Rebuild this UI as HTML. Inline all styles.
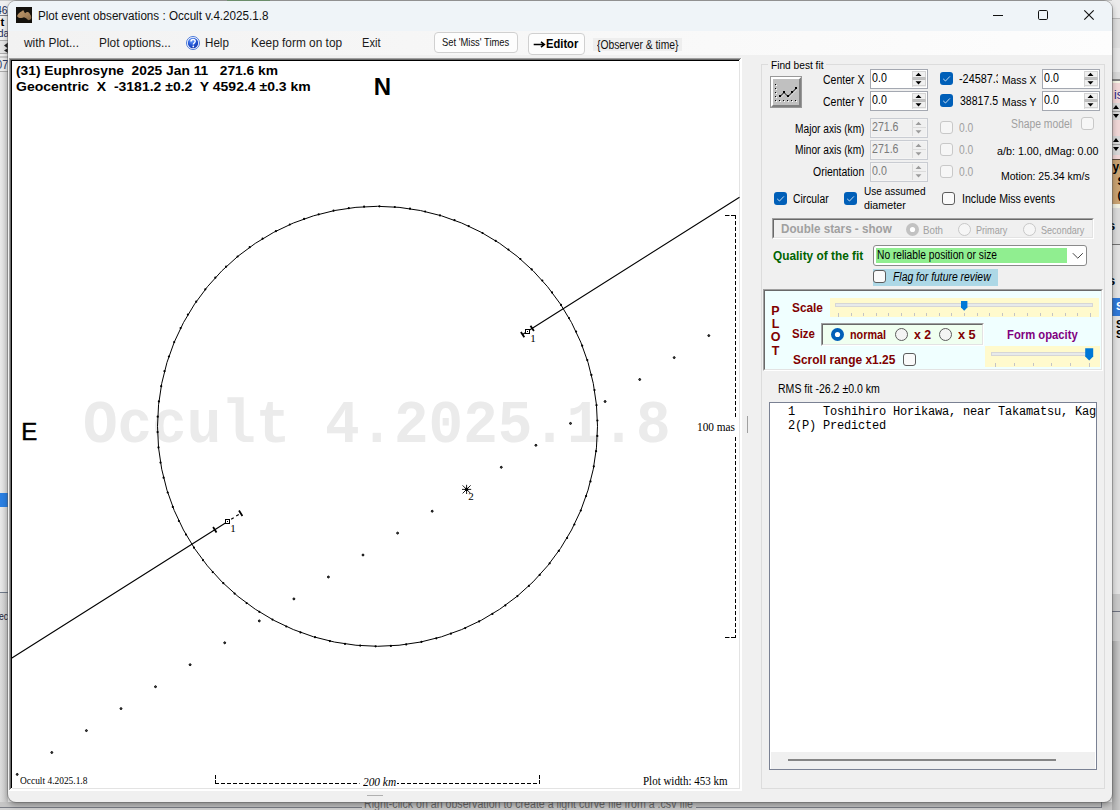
<!DOCTYPE html>
<html><head><meta charset="utf-8"><title>Plot event observations</title>
<style>
html,body{margin:0;padding:0;}
body{width:1120px;height:810px;overflow:hidden;position:relative;background:#cdcdcd;font-family:"Liberation Sans",sans-serif;}
.t{position:absolute;white-space:pre;display:block;}
.r{position:absolute;box-sizing:border-box;}
svg{position:absolute;overflow:visible;}
#root{position:absolute;left:0;top:0;width:1120px;height:810px;overflow:hidden;}
</style></head><body><div id="root">
<div class="r" style="left:0px;top:0px;width:1120px;height:810px;background:#f0f0f0;"></div>
<div class="r" style="left:0px;top:0px;width:1120px;height:1px;background:#c8c8c8;"></div>
<div class="r" style="left:227px;top:0px;width:43px;height:1px;background:#7fbf7f;"></div>
<div class="r" style="left:0px;top:1px;width:8px;height:56px;background:#f0f0f0;"></div>
<span class="t" style="left:-4.00px;top:4.00px;font-size:10.5px;line-height:12px;font-family:'Liberation Sans',sans-serif;color:#1a2a55;transform:scale(0.9935,1);transform-origin:0 10px;">46</span>
<div class="r" style="left:0px;top:15px;width:8px;height:1px;background:#7d808a;"></div>
<span class="t" style="left:0.50px;top:16.00px;font-size:11.5px;line-height:12px;font-family:'Liberation Sans',sans-serif;color:#000;font-weight:bold;">t</span>
<span class="t" style="left:-2.50px;top:27.00px;font-size:10.5px;line-height:12px;font-family:'Liberation Sans',sans-serif;color:#1a2a55;transform:scale(0.9413,1);transform-origin:0 10px;">da</span>
<div class="r" style="left:0px;top:40px;width:8px;height:14px;background:#e4e4e4;border-top:1px solid #adadad;border-bottom:1px solid #adadad;"></div>
<svg style="left:0;top:0" width="8" height="60"><path d="M4 45.500l4-3v6zM4 50.500l4-2.500v5z" fill="#222"/></svg>
<div class="r" style="left:0px;top:56px;width:8px;height:2px;background:#c9c9c9;"></div>
<div class="r" style="left:0px;top:58px;width:8px;height:14px;background:#ececec;"></div>
<span class="t" style="left:-4.50px;top:58.00px;font-size:12px;line-height:14px;font-family:'Liberation Sans',sans-serif;color:#2c3a66;transform:scale(0.9218,1);transform-origin:0 11px;">07</span>
<div class="r" style="left:0px;top:71px;width:8px;height:1px;background:#a8a8a8;"></div>
<div class="r" style="left:0;top:72px;width:8px;height:730px;background:linear-gradient(90deg,#e9e9e9,#d6d6d6)"></div>
<div class="r" style="left:0px;top:493px;width:8px;height:14px;background:#2a7fe2;"></div>
<div class="r" style="left:0px;top:592px;width:8px;height:1px;background:#6e7887;"></div>
<div class="r" style="left:0;top:593px;width:8px;height:209px;background:linear-gradient(90deg,#dcdcdc,#c8c8c8)"></div>
<span class="t" style="left:-1.50px;top:610.00px;font-size:10.5px;line-height:12px;font-family:'Liberation Sans',sans-serif;color:#223;transform:scale(0.8207,1);transform-origin:0 10px;">ec</span>
<div class="r" style="left:1112px;top:0px;width:8px;height:18px;background:#ebebeb;"></div>
<div class="r" style="left:1112px;top:18px;width:8px;height:1px;background:#b8b8b8;"></div>
<div class="r" style="left:1112px;top:19px;width:8px;height:29px;background:#dedede;"></div>
<div class="r" style="left:1112px;top:48px;width:8px;height:24px;background:#e6e6e6;"></div>
<div class="r" style="left:1112px;top:72px;width:8px;height:7px;background:#d8d8d8;"></div>
<div class="r" style="left:1112px;top:79px;width:8px;height:2px;background:#808080;"></div>
<div class="r" style="left:1112px;top:81px;width:8px;height:2px;background:#f6f6e6;"></div>
<div class="r" style="left:1112px;top:83px;width:8px;height:77px;background:#f0d6d6;"></div>
<div class="r" style="left:1112px;top:103px;width:8px;height:17px;background:#d8d8d8;"></div>
<div class="r" style="left:1112px;top:111px;width:8px;height:1px;background:#a0a0a0;"></div>
<div class="r" style="left:1112px;top:136px;width:8px;height:17px;background:#d8d8d8;"></div>
<div class="r" style="left:1112px;top:144px;width:8px;height:1px;background:#a0a0a0;"></div>
<div class="r" style="left:1112px;top:153px;width:8px;height:2px;background:#d7d7d7;"></div>
<svg style="left:0;top:0" width="1120" height="810"><path d="M1113 109l3-4 3 4zM1113 114l3 4 3-4zM1113 142l3-4 3 4zM1113 147l3 4 3-4z" fill="#000"/></svg>
<span class="t" style="left:1114.00px;top:88.00px;font-size:12px;line-height:14px;font-family:'Liberation Sans',sans-serif;color:#228;">is</span>
<div class="r" style="left:1112px;top:159px;width:8px;height:1px;background:#5a4a3a;"></div>
<div class="r" style="left:1112px;top:160px;width:8px;height:44px;background:#c9a373;"></div>
<span class="t" style="left:1112.50px;top:160.00px;font-size:12px;line-height:14px;font-family:'Liberation Sans',sans-serif;color:#000;font-weight:bold;">ye</span>
<span class="t" style="left:1117.50px;top:175.00px;font-size:11px;line-height:12px;font-family:'Liberation Sans',sans-serif;color:#000;font-weight:bold;">S</span>
<span class="t" style="left:1117.50px;top:189.00px;font-size:11px;line-height:12px;font-family:'Liberation Sans',sans-serif;color:#000;font-weight:bold;">(</span>
<div class="r" style="left:1112px;top:204px;width:8px;height:4px;background:#f0f0e2;"></div>
<div class="r" style="left:1112px;top:208px;width:8px;height:36px;background:#dadada;"></div>
<span class="t" style="left:1108.00px;top:218.00px;font-size:13px;line-height:15px;font-family:'Liberation Sans',sans-serif;color:#000;font-weight:bold;">s</span>
<div class="r" style="left:1112px;top:244px;width:8px;height:1px;background:#707070;"></div>
<div class="r" style="left:1112px;top:245px;width:8px;height:349px;background:#e2e2e2;"></div>
<span class="t" style="left:1108.00px;top:273.00px;font-size:13px;line-height:15px;font-family:'Liberation Sans',sans-serif;color:#000;font-weight:bold;">s</span>
<div class="r" style="left:1112px;top:298px;width:8px;height:18px;background:#2f78d7;"></div>
<span class="t" style="left:1116.00px;top:300.00px;font-size:11px;line-height:12px;font-family:'Liberation Sans',sans-serif;color:#fff;font-weight:bold;">S</span>
<span class="t" style="left:1116.00px;top:318.00px;font-size:11px;line-height:12px;font-family:'Liberation Sans',sans-serif;color:#000;font-weight:bold;">S</span>
<span class="t" style="left:1116.00px;top:328.00px;font-size:11px;line-height:12px;font-family:'Liberation Sans',sans-serif;color:#000;font-weight:bold;">S</span>
<div class="r" style="left:1112px;top:594px;width:8px;height:17px;background:#c8c8c8;"></div>
<div class="r" style="left:1112px;top:611px;width:8px;height:1px;background:#6e7280;"></div>
<div class="r" style="left:1112px;top:612px;width:8px;height:29px;background:#cdcdcd;"></div>
<div class="r" style="left:1112px;top:641px;width:8px;height:169px;background:linear-gradient(90deg,#a8a8a8,#c8c8c8)"></div>
<div class="r" style="left:0px;top:802px;width:1112px;height:8px;background:#c6c6c6;"></div>
<div class="r" style="left:0px;top:807px;width:1102px;height:1px;background:#7a7d86;"></div>
<div class="r" style="left:1101px;top:802px;width:1px;height:6px;background:#7a7d86;"></div>
<div class="r" style="left:0px;top:808px;width:1102px;height:2px;background:#d2d2d2;"></div>
<div class="r" style="left:362px;top:802px;width:334px;height:8px;background:#c9c9c9;"></div>
<span class="t" style="left:364.00px;top:796.00px;font-size:13px;line-height:15px;font-family:'Liberation Sans',sans-serif;color:#6a6a6a;transform:scale(0.8175,1);transform-origin:0 12px;">Right-click on an observation to create a light curve file from a .csv file</span>
<div class="r" style="left:8px;top:1px;width:1104px;height:801px;background:#f0f0f0;border-radius:8px;box-shadow:0 0 0 1px rgba(90,90,90,.45),0 3px 6px rgba(0,0,0,.35)"></div>
<div class="r" style="left:8px;top:1px;width:1104px;height:30px;background:#eff4f8;border-radius:8px 8px 0 0"></div>
<div class="r" style="left:8px;top:31px;width:1104px;height:24px;background:linear-gradient(90deg,#f2f2f2,#fdfdfd)"></div>
<svg style="left:16px;top:7px" width="16" height="16"><defs><linearGradient id="ag" x1="0" y1="0" x2="1" y2="1"><stop offset="0" stop-color="#bb9669"/><stop offset=".6" stop-color="#a8845b"/><stop offset="1" stop-color="#7d6244"/></linearGradient></defs><rect width="16" height="16" fill="#14110d"/><path d="M1.100 9.100C1.500 7.500 2.200 6.800 2.700 6.400C3.500 5.500 4.500 5 5.400 4.600C6 4 6.600 3.300 7.200 3.200C7.700 3.400 7.800 4.200 8 4.600C8.400 5.300 8.700 5.900 9.100 6.200C10 5.600 11 5 11.800 5.100C12.800 5.400 13.500 6.200 13.900 7C14.700 8 15.200 9 15.300 10.200C15.300 11.300 14.900 12.200 14.200 12.600C13.600 13 12.900 13.200 12.300 13.100C11.500 12.600 10.800 11.900 10.200 11.300C9.500 10.800 8.700 10.300 8 10.200C7.100 10.400 6.200 10.800 5.400 11C4.500 11.100 3.500 11 2.700 10.700C2 10.400 1.300 9.800 1.100 9.100Z" fill="url(#ag)"/><path d="M8.600 6.600C9.200 8 9.600 9.400 10.600 10.600" fill="none" stroke="#9a7a55" stroke-width=".8" stroke-opacity=".7"/></svg>
<span class="t" style="left:37.50px;top:9.00px;font-size:12px;line-height:14px;font-family:'Liberation Sans',sans-serif;color:#111;transform:scale(0.9715,1);transform-origin:0 11px;">Plot event observations : Occult v.4.2025.1.8</span>
<svg style="left:0;top:0" width="1120" height="40"><g stroke="#111" stroke-width="1" fill="none"><path d="M993 15.500h10"/><rect x="1038.500" y="10.500" width="9" height="9" rx="1.200"/><path d="M1084.300 10.300l9.400 9.400M1093.700 10.300l-9.400 9.400" stroke-width="1.150"/></g></svg>
<span class="t" style="left:23.52px;top:36.00px;font-size:12px;line-height:14px;font-family:'Liberation Sans',sans-serif;color:#1a1a1a;transform:scale(0.9931,1);transform-origin:0 11px;">with Plot...</span>
<span class="t" style="left:98.60px;top:36.00px;font-size:12px;line-height:14px;font-family:'Liberation Sans',sans-serif;color:#1a1a1a;transform:scale(0.9875,1);transform-origin:0 11px;">Plot options...</span>
<svg style="left:186px;top:36px" width="14" height="14"><defs><radialGradient id="hg" cx="38%" cy="28%" r="80%"><stop offset="0" stop-color="#6fa2ff"/><stop offset=".5" stop-color="#2358d8"/><stop offset="1" stop-color="#1736a8"/></radialGradient></defs><circle cx="7" cy="7" r="6.500" fill="#fff" stroke="#4a78d8" stroke-width="1"/><circle cx="7" cy="7" r="5.200" fill="url(#hg)"/><path d="M5 5.600c0-1.300 .9-2.100 2.100-2.100 1.200 0 2.100 .7 2.100 1.800 0 1.600-1.900 1.700-1.900 3.200" fill="none" stroke="#fff" stroke-width="1.400"/><circle cx="7.300" cy="10.400" r=".85" fill="#fff"/></svg>
<span class="t" style="left:204.80px;top:36.00px;font-size:12px;line-height:14px;font-family:'Liberation Sans',sans-serif;color:#1a1a1a;transform:scale(0.9682,1);transform-origin:0 11px;">Help</span>
<span class="t" style="left:250.60px;top:36.00px;font-size:12px;line-height:14px;font-family:'Liberation Sans',sans-serif;color:#1a1a1a;transform:scale(0.9897,1);transform-origin:0 11px;">Keep form on top</span>
<span class="t" style="left:361.50px;top:36.00px;font-size:12px;line-height:14px;font-family:'Liberation Sans',sans-serif;color:#1a1a1a;transform:scale(0.9248,1);transform-origin:0 11px;">Exit</span>
<div class="r" style="left:434px;top:32px;width:84px;height:21px;background:#fdfdfd;border:1px solid #d0d0d0;border-radius:4px;"></div>
<span class="t" style="left:441.50px;top:36.00px;font-size:11px;line-height:12px;font-family:'Liberation Sans',sans-serif;color:#111;transform:scale(0.8531,1);transform-origin:0 10px;">Set 'Miss' Times</span>
<div class="r" style="left:527.5px;top:32.5px;width:57.5px;height:22px;background:#fdfdfd;border:1px solid #d0d0d0;border-radius:4px;"></div>
<span class="t" style="left:545.60px;top:37.00px;font-size:12.5px;line-height:14px;font-family:'Liberation Sans',sans-serif;color:#000;font-weight:bold;transform:scale(0.8944,1);transform-origin:0 11px;">Editor</span>
<svg style="left:0;top:0" width="1120" height="60"><path d="M533.700 44.500H544.200M541 41.800l3.400 2.700-3.400 2.700" fill="none" stroke="#000" stroke-width="1.500"/></svg>
<div class="r" style="left:593px;top:38px;width:89px;height:13px;background:#eeeeee;"></div>
<span class="t" style="left:596.80px;top:38.00px;font-size:12px;line-height:14px;font-family:'Liberation Sans',sans-serif;color:#111;transform:scale(0.8595,1);transform-origin:0 11px;">{Observer &amp; time}</span>
<div class="r" style="left:9px;top:58px;width:733px;height:733px;background:#fff;"></div>
<div class="r" style="left:9px;top:58px;width:732px;height:1px;background:#a0a0a0;"></div>
<div class="r" style="left:9px;top:58px;width:1px;height:732px;background:#a0a0a0;"></div>
<div class="r" style="left:10px;top:59px;width:730px;height:1px;background:#696969;"></div>
<div class="r" style="left:10px;top:59px;width:1px;height:730px;background:#696969;"></div>
<div class="r" style="left:11px;top:60px;width:728px;height:1px;background:#000;"></div>
<div class="r" style="left:11px;top:60px;width:1px;height:728px;background:#000;"></div>
<div class="r" style="left:739px;top:61px;width:1px;height:728px;background:#e3e3e3;"></div>
<div class="r" style="left:12px;top:788px;width:728px;height:1px;background:#e3e3e3;"></div>
<span class="t" style="left:82.50px;top:390.00px;font-size:62px;line-height:71px;font-family:'Liberation Mono',monospace;color:#ebebeb;font-weight:bold;transform:scale(0.9288,1);transform-origin:0 52px;">Occult 4.2025.1.8</span>
<span class="t" style="left:15.60px;top:63.00px;font-size:13.33px;line-height:15px;font-family:'Liberation Sans',sans-serif;color:#000;font-weight:bold;transform:scale(1.0339,1);transform-origin:0 12px;">(31) Euphrosyne  2025 Jan 11   271.6 km</span>
<span class="t" style="left:15.80px;top:79.00px;font-size:13.33px;line-height:15px;font-family:'Liberation Sans',sans-serif;color:#000;font-weight:bold;transform:scale(1.0491,1);transform-origin:0 12px;">Geocentric  X  -3181.2 ±0.2  Y 4592.4 ±0.3 km</span>
<span class="t" style="left:373.80px;top:73.00px;font-size:24px;line-height:27px;font-family:'Liberation Sans',sans-serif;color:#000;font-weight:bold;">N</span>
<span class="t" style="left:21.20px;top:418.00px;font-size:24px;line-height:27px;font-family:'Liberation Sans',sans-serif;color:#000;-webkit-text-stroke:0.500px #000;">E</span>
<svg style="left:0;top:0" width="1120" height="810"><circle cx="377.5" cy="426.3" r="220" fill="none" stroke="#000" stroke-width="1"/><path d="M597.3 435.9h0M596.1 451.2h0M593.8 466.4h0M590.5 481.4h0M586.1 496.1h0M580.8 510.5h0M574.4 524.5h0M567.1 538.0h0M558.8 550.9h0M549.7 563.3h0M539.7 574.9h0M528.9 585.9h0M517.4 596.1h0M505.3 605.4h0M492.4 613.9h0M479.1 621.4h0M465.2 628.1h0M450.9 633.7h0M436.3 638.3h0M421.4 641.9h0M406.2 644.4h0M390.9 645.9h0M375.6 646.3h0M360.2 645.6h0M345.0 643.9h0M329.9 641.1h0M315.0 637.2h0M300.5 632.4h0M286.3 626.5h0M272.5 619.6h0M259.3 611.8h0M246.6 603.1h0M234.6 593.6h0M223.3 583.2h0M212.7 572.1h0M203.0 560.2h0M194.0 547.7h0M186.0 534.6h0M178.9 521.0h0M172.8 506.9h0M167.7 492.5h0M163.6 477.7h0M160.5 462.6h0M158.5 447.4h0M157.6 432.1h0M157.7 416.7h0M158.9 401.4h0M161.2 386.2h0M164.5 371.2h0M168.9 356.5h0M174.2 342.1h0M180.6 328.1h0M187.9 314.6h0M196.2 301.7h0M205.3 289.3h0M215.3 277.7h0M226.1 266.7h0M237.6 256.5h0M249.7 247.2h0M262.6 238.7h0M275.9 231.2h0M289.8 224.5h0M304.1 218.9h0M318.7 214.3h0M333.6 210.7h0M348.8 208.2h0M364.1 206.7h0M379.4 206.3h0M394.8 207.0h0M410.0 208.7h0M425.1 211.5h0M440.0 215.4h0M454.5 220.2h0M468.7 226.1h0M482.5 233.0h0M495.7 240.8h0M508.4 249.5h0M520.4 259.0h0M531.7 269.4h0M542.3 280.5h0M552.0 292.4h0M561.0 304.9h0M569.0 318.0h0M576.1 331.6h0M582.2 345.7h0M587.3 360.1h0M591.4 374.9h0M594.5 390.0h0M596.5 405.2h0M597.4 420.5h0" stroke="#000" stroke-width="2.200" stroke-linecap="round" fill="none"/><path d="M527.6 331.3L739.5 197.2M227.8 521.5L11.500 658.300" stroke="#000" stroke-width="1.1" fill="none"/><path d="M527.6 331.3L522.6 334.5" stroke="#000" stroke-width="1.1" fill="none"/><path d="M229.5 520.4L240.7 513.2" stroke="#000" stroke-width="1.100" stroke-dasharray="3 3" stroke-dashoffset="-2" fill="none"/><path d="M530.5 325.7L533.9 331.1M520.9 331.9L524.3 337.3M213.1 527.1L216.5 532.5M239.0 510.5L242.4 515.9" stroke="#000" stroke-width="1.8" fill="none"/><rect x="525.5" y="329.500" width="4" height="4" fill="#fff" stroke="#000" stroke-width="1"/><rect x="225.5" y="519.500" width="4" height="4" fill="#fff" stroke="#000" stroke-width="1"/><path d="M527 331.500h1M227 521.500h1" stroke="#000" stroke-width="1"/><circle cx="17.2" cy="774.4" r="0.950" fill="#555" stroke="#000" stroke-width="1"/><circle cx="51.8" cy="752.5" r="0.950" fill="#555" stroke="#000" stroke-width="1"/><circle cx="86.4" cy="730.6" r="0.950" fill="#555" stroke="#000" stroke-width="1"/><circle cx="121.0" cy="708.6" r="0.950" fill="#555" stroke="#000" stroke-width="1"/><circle cx="155.5" cy="686.7" r="0.950" fill="#555" stroke="#000" stroke-width="1"/><circle cx="190.1" cy="664.7" r="0.950" fill="#555" stroke="#000" stroke-width="1"/><circle cx="224.7" cy="642.8" r="0.950" fill="#555" stroke="#000" stroke-width="1"/><circle cx="259.3" cy="620.9" r="0.950" fill="#555" stroke="#000" stroke-width="1"/><circle cx="293.9" cy="598.9" r="0.950" fill="#555" stroke="#000" stroke-width="1"/><circle cx="328.4" cy="577.0" r="0.950" fill="#555" stroke="#000" stroke-width="1"/><circle cx="363.0" cy="555.0" r="0.950" fill="#555" stroke="#000" stroke-width="1"/><circle cx="397.6" cy="533.1" r="0.950" fill="#555" stroke="#000" stroke-width="1"/><circle cx="432.2" cy="511.2" r="0.950" fill="#555" stroke="#000" stroke-width="1"/><circle cx="501.3" cy="467.3" r="0.950" fill="#555" stroke="#000" stroke-width="1"/><circle cx="535.9" cy="445.3" r="0.950" fill="#555" stroke="#000" stroke-width="1"/><circle cx="570.5" cy="423.4" r="0.950" fill="#555" stroke="#000" stroke-width="1"/><circle cx="605.1" cy="401.5" r="0.950" fill="#555" stroke="#000" stroke-width="1"/><circle cx="639.7" cy="379.5" r="0.950" fill="#555" stroke="#000" stroke-width="1"/><circle cx="674.2" cy="357.6" r="0.950" fill="#555" stroke="#000" stroke-width="1"/><circle cx="708.8" cy="335.6" r="0.950" fill="#555" stroke="#000" stroke-width="1"/><path d="M466.6 489.4L471.2 489.4M466.6 489.4L470.6 493.4M466.6 489.4L466.6 494.0M466.6 489.4L462.6 493.4M466.6 489.4L462.0 489.4M466.6 489.4L462.6 485.4M466.6 489.4L466.6 484.8M466.6 489.4L470.6 485.4" stroke="#000" stroke-width="0.9" fill="none"/><circle cx="466.6" cy="489.4" r="1.800" fill="#000"/><path d="M735.5 215V638" stroke="#000" stroke-width="1" stroke-dasharray="4 2" fill="none"/><path d="M725 215.500h11M725 637.500h11" stroke="#000" stroke-width="1" stroke-dasharray="4.500 1.500" fill="none"/><path d="M215 783.500H540" stroke="#000" stroke-width="1" stroke-dasharray="4 2" fill="none"/><path d="M215.500 775V784M539.500 775V784" stroke="#000" stroke-width="1" stroke-dasharray="4 1" fill="none"/><rect x="695" y="418" width="42" height="18.500" fill="#fff"/><rect x="359.500" y="776" width="37.500" height="11" fill="#fff"/></svg>
<span class="t" style="left:530.30px;top:332.00px;font-size:11px;line-height:12px;font-family:'Liberation Serif',serif;color:#000;">1</span>
<span class="t" style="left:230.30px;top:522.00px;font-size:11px;line-height:12px;font-family:'Liberation Serif',serif;color:#000;">1</span>
<span class="t" style="left:468.20px;top:490.00px;font-size:11px;line-height:12px;font-family:'Liberation Serif',serif;color:#000;">2</span>
<span class="t" style="left:697.00px;top:419.00px;font-size:13.5px;line-height:15px;font-family:'Liberation Serif',serif;color:#000;transform:scale(0.8375,1);transform-origin:0 12px;">100 mas</span>
<span class="t" style="left:19.60px;top:775.00px;font-size:10.5px;line-height:11px;font-family:'Liberation Serif',serif;color:#000;transform:scale(0.8958,1);transform-origin:0 9px;">Occult 4.2025.1.8</span>
<span class="t" style="left:363.30px;top:775.00px;font-size:12.5px;line-height:14px;font-family:'Liberation Serif',serif;color:#000;font-style:italic;transform:scale(0.9081,1);transform-origin:0 11px;clip-path:inset(0 0 2px 0);">200 km</span>
<span class="t" style="left:642.60px;top:774.00px;font-size:12.5px;line-height:14px;font-family:'Liberation Serif',serif;color:#000;transform:scale(0.8775,1);transform-origin:0 11px;">Plot width: 453 km</span>
<div class="r" style="left:747px;top:416px;width:1px;height:17px;background:#a0a0a0;"></div>
<div class="r" style="left:761px;top:64px;width:344px;height:725px;border:1px solid #dcdcdc;"></div>
<div class="r" style="left:768px;top:58px;width:58px;height:14px;background:#f0f0f0;"></div>
<span class="t" style="left:770.50px;top:59.00px;font-size:11.5px;line-height:12px;font-family:'Liberation Sans',sans-serif;color:#000;transform:scale(0.8832,1);transform-origin:0 10px;">Find best fit</span>
<div class="r" style="left:770px;top:76px;width:32px;height:32px;background:#c0c0c0;border:1px solid #989898;"></div>
<div class="r" style="left:771px;top:77px;width:30px;height:2px;background:#fff;"></div>
<div class="r" style="left:771px;top:77px;width:2px;height:30px;background:#fff;"></div>
<div class="r" style="left:773px;top:105px;width:28px;height:2px;background:#808080;"></div>
<div class="r" style="left:799px;top:79px;width:2px;height:28px;background:#808080;"></div>
<svg style="left:771px;top:77px" width="2" height="30"><path d="M0 30L2 28V30z" fill="#808080"/></svg>
<svg style="left:799px;top:77px" width="2" height="2"><path d="M0 2L2 0V2z" fill="#808080"/><path d="M0 0H2L0 2z" fill="#fff"/></svg>
<svg style="left:0;top:0" width="1120" height="810" shape-rendering="crispEdges"><rect x="776" y="85" width="1" height="1" fill="#fff"/><rect x="775" y="84" width="1" height="1" fill="#000"/><rect x="776" y="89" width="1" height="1" fill="#fff"/><rect x="775" y="88" width="1" height="1" fill="#000"/><rect x="776" y="93" width="1" height="1" fill="#fff"/><rect x="775" y="92" width="1" height="1" fill="#000"/><rect x="776" y="97" width="1" height="1" fill="#fff"/><rect x="775" y="96" width="1" height="1" fill="#000"/><rect x="776" y="101" width="1" height="1" fill="#fff"/><rect x="775" y="100" width="1" height="1" fill="#000"/><rect x="780" y="101" width="1" height="1" fill="#fff"/><rect x="779" y="100" width="1" height="1" fill="#000"/><rect x="784" y="101" width="1" height="1" fill="#fff"/><rect x="783" y="100" width="1" height="1" fill="#000"/><rect x="788" y="101" width="1" height="1" fill="#fff"/><rect x="787" y="100" width="1" height="1" fill="#000"/><rect x="792" y="101" width="1" height="1" fill="#fff"/><rect x="791" y="100" width="1" height="1" fill="#000"/><rect x="796" y="101" width="1" height="1" fill="#fff"/><rect x="795" y="100" width="1" height="1" fill="#000"/></svg>
<svg style="left:0;top:0" width="1120" height="810"><path d="M781 97.500L785 93.500 789 97.500 793 93.500 797 89.500" fill="none" stroke="#fff" stroke-width="1" stroke-opacity=".45"/><path d="M780 96.500L784 92.500 788 96.500 792 92.500 796 88.500" fill="none" stroke="#000" stroke-width="1"/><path d="M779 95h2v2h-2zM783 91h2v2h-2zM787 95h2v2h-2zM791 91h2v2h-2zM795 87h2v2h-2z" fill="#000"/></svg>
<span class="t" style="left:822.80px;top:73.00px;font-size:12.5px;line-height:14px;font-family:'Liberation Sans',sans-serif;color:#000;transform:scale(0.8393,1);transform-origin:0 11px;">Center X</span>
<span class="t" style="left:822.80px;top:95.00px;font-size:12.5px;line-height:14px;font-family:'Liberation Sans',sans-serif;color:#000;transform:scale(0.8432,1);transform-origin:0 11px;">Center Y</span>
<div class="r" style="left:870px;top:69px;width:58px;height:20px;background:#fff;border:1px solid #a4a8b1;box-shadow:inset 0 0 0 1px #fff;"></div>
<div class="r" style="left:912px;top:71px;width:14px;height:16px;background:#f0f0f0;border-left:1px solid #dadada;"></div>
<div class="r" style="left:912px;top:71px;width:14px;height:7px;background:#f0f0f0;border:1px solid #d4d4d4;border-bottom-color:#bdbdbd;"></div>
<div class="r" style="left:912px;top:79px;width:14px;height:7px;background:#f0f0f0;border:1px solid #d4d4d4;border-top-color:#bdbdbd;"></div>
<div class="r" style="left:912px;top:78px;width:14px;height:1px;background:#c2c2c2;"></div>
<svg style="left:915px;top:72px" width="8" height="14"><path d="M0.500 4L3.500 0.800 6.500 4z M0.500 9.200L3.500 12.400 6.500 9.200z" fill="#000"/></svg>
<span class="t" style="left:872.30px;top:71.00px;font-size:12.5px;line-height:14px;font-family:'Liberation Sans',sans-serif;color:#000;transform:scale(0.8518,1);transform-origin:0 11px;">0.0</span>
<div class="r" style="left:870px;top:91px;width:58px;height:20px;background:#fff;border:1px solid #a4a8b1;box-shadow:inset 0 0 0 1px #fff;"></div>
<div class="r" style="left:912px;top:93px;width:14px;height:16px;background:#f0f0f0;border-left:1px solid #dadada;"></div>
<div class="r" style="left:912px;top:93px;width:14px;height:7px;background:#f0f0f0;border:1px solid #d4d4d4;border-bottom-color:#bdbdbd;"></div>
<div class="r" style="left:912px;top:101px;width:14px;height:7px;background:#f0f0f0;border:1px solid #d4d4d4;border-top-color:#bdbdbd;"></div>
<div class="r" style="left:912px;top:100px;width:14px;height:1px;background:#c2c2c2;"></div>
<svg style="left:915px;top:94px" width="8" height="14"><path d="M0.500 4L3.500 0.800 6.500 4z M0.500 9.200L3.500 12.400 6.500 9.200z" fill="#000"/></svg>
<span class="t" style="left:872.30px;top:93.00px;font-size:12.5px;line-height:14px;font-family:'Liberation Sans',sans-serif;color:#000;transform:scale(0.8518,1);transform-origin:0 11px;">0.0</span>
<svg style="left:940px;top:72px" width="13" height="13"><rect width="13" height="13" rx="3" fill="#005fb8"/><path d="M3.200 6.900L5.500 9 9.900 4.400" fill="none" stroke="#fff" stroke-width="0.900" stroke-opacity=".85"/></svg>
<svg style="left:940px;top:94px" width="13" height="13"><rect width="13" height="13" rx="3" fill="#005fb8"/><path d="M3.200 6.900L5.500 9 9.900 4.400" fill="none" stroke="#fff" stroke-width="0.900" stroke-opacity=".85"/></svg>
<span class="t" style="left:959.20px;top:72.00px;font-size:12.5px;line-height:14px;font-family:'Liberation Sans',sans-serif;color:#000;transform:scale(0.8673,1);transform-origin:0 11px;clip-path:inset(0 4.500px 0 0);">-24587.3</span>
<span class="t" style="left:959.50px;top:94.00px;font-size:12.5px;line-height:14px;font-family:'Liberation Sans',sans-serif;color:#000;transform:scale(0.8432,1);transform-origin:0 11px;">38817.5</span>
<span class="t" style="left:1001.60px;top:74.00px;font-size:11px;line-height:12px;font-family:'Liberation Sans',sans-serif;color:#000;transform:scale(0.9380,1);transform-origin:0 10px;">Mass X</span>
<span class="t" style="left:1001.60px;top:96.00px;font-size:11px;line-height:12px;font-family:'Liberation Sans',sans-serif;color:#000;transform:scale(0.9431,1);transform-origin:0 10px;">Mass Y</span>
<div class="r" style="left:1042px;top:69px;width:58px;height:20px;background:#fff;border:1px solid #a4a8b1;box-shadow:inset 0 0 0 1px #fff;"></div>
<div class="r" style="left:1084px;top:71px;width:14px;height:16px;background:#f0f0f0;border-left:1px solid #dadada;"></div>
<div class="r" style="left:1084px;top:71px;width:14px;height:7px;background:#f0f0f0;border:1px solid #d4d4d4;border-bottom-color:#bdbdbd;"></div>
<div class="r" style="left:1084px;top:79px;width:14px;height:7px;background:#f0f0f0;border:1px solid #d4d4d4;border-top-color:#bdbdbd;"></div>
<div class="r" style="left:1084px;top:78px;width:14px;height:1px;background:#c2c2c2;"></div>
<svg style="left:1087px;top:72px" width="8" height="14"><path d="M0.500 4L3.500 0.800 6.500 4z M0.500 9.200L3.500 12.400 6.500 9.200z" fill="#000"/></svg>
<span class="t" style="left:1044.30px;top:71.00px;font-size:12.5px;line-height:14px;font-family:'Liberation Sans',sans-serif;color:#000;transform:scale(0.8518,1);transform-origin:0 11px;">0.0</span>
<div class="r" style="left:1042px;top:91px;width:58px;height:20px;background:#fff;border:1px solid #a4a8b1;box-shadow:inset 0 0 0 1px #fff;"></div>
<div class="r" style="left:1084px;top:93px;width:14px;height:16px;background:#f0f0f0;border-left:1px solid #dadada;"></div>
<div class="r" style="left:1084px;top:93px;width:14px;height:7px;background:#f0f0f0;border:1px solid #d4d4d4;border-bottom-color:#bdbdbd;"></div>
<div class="r" style="left:1084px;top:101px;width:14px;height:7px;background:#f0f0f0;border:1px solid #d4d4d4;border-top-color:#bdbdbd;"></div>
<div class="r" style="left:1084px;top:100px;width:14px;height:1px;background:#c2c2c2;"></div>
<svg style="left:1087px;top:94px" width="8" height="14"><path d="M0.500 4L3.500 0.800 6.500 4z M0.500 9.200L3.500 12.400 6.500 9.200z" fill="#000"/></svg>
<span class="t" style="left:1044.30px;top:93.00px;font-size:12.5px;line-height:14px;font-family:'Liberation Sans',sans-serif;color:#000;transform:scale(0.8518,1);transform-origin:0 11px;">0.0</span>
<span class="t" style="left:794.70px;top:122.00px;font-size:12.5px;line-height:14px;font-family:'Liberation Sans',sans-serif;color:#000;transform:scale(0.8136,1);transform-origin:0 11px;">Major axis (km)</span>
<span class="t" style="left:794.70px;top:143.00px;font-size:12.5px;line-height:14px;font-family:'Liberation Sans',sans-serif;color:#000;transform:scale(0.8136,1);transform-origin:0 11px;">Minor axis (km)</span>
<span class="t" style="left:812.80px;top:165.00px;font-size:12.5px;line-height:14px;font-family:'Liberation Sans',sans-serif;color:#000;transform:scale(0.8373,1);transform-origin:0 11px;">Orientation</span>
<div class="r" style="left:870px;top:118px;width:58px;height:20px;background:#f0f0f0;border:1px solid #c9ccd2;box-shadow:inset 0 0 0 1px #f4f4f4;"></div>
<div class="r" style="left:912px;top:120px;width:14px;height:16px;background:#f0f0f0;border-left:1px solid #dadada;"></div>
<div class="r" style="left:912px;top:127px;width:14px;height:1px;background:#dcdcdc;"></div>
<svg style="left:915px;top:121px" width="8" height="14"><path d="M0.500 4L3.500 0.800 6.500 4z M0.500 9.200L3.500 12.400 6.500 9.200z" fill="#9c9c9c"/></svg>
<span class="t" style="left:872.30px;top:120.00px;font-size:12.5px;line-height:14px;font-family:'Liberation Sans',sans-serif;color:#7a7a7a;transform:scale(0.8473,1);transform-origin:0 11px;">271.6</span>
<div class="r" style="left:870px;top:140px;width:58px;height:20px;background:#f0f0f0;border:1px solid #c9ccd2;box-shadow:inset 0 0 0 1px #f4f4f4;"></div>
<div class="r" style="left:912px;top:142px;width:14px;height:16px;background:#f0f0f0;border-left:1px solid #dadada;"></div>
<div class="r" style="left:912px;top:149px;width:14px;height:1px;background:#dcdcdc;"></div>
<svg style="left:915px;top:143px" width="8" height="14"><path d="M0.500 4L3.500 0.800 6.500 4z M0.500 9.200L3.500 12.400 6.500 9.200z" fill="#9c9c9c"/></svg>
<span class="t" style="left:872.30px;top:142.00px;font-size:12.5px;line-height:14px;font-family:'Liberation Sans',sans-serif;color:#7a7a7a;transform:scale(0.8473,1);transform-origin:0 11px;">271.6</span>
<div class="r" style="left:870px;top:162px;width:58px;height:20px;background:#f0f0f0;border:1px solid #c9ccd2;box-shadow:inset 0 0 0 1px #f4f4f4;"></div>
<div class="r" style="left:912px;top:164px;width:14px;height:16px;background:#f0f0f0;border-left:1px solid #dadada;"></div>
<div class="r" style="left:912px;top:171px;width:14px;height:1px;background:#dcdcdc;"></div>
<svg style="left:915px;top:165px" width="8" height="14"><path d="M0.500 4L3.500 0.800 6.500 4z M0.500 9.200L3.500 12.400 6.500 9.200z" fill="#9c9c9c"/></svg>
<span class="t" style="left:872.30px;top:164.00px;font-size:12.5px;line-height:14px;font-family:'Liberation Sans',sans-serif;color:#7a7a7a;transform:scale(0.8518,1);transform-origin:0 11px;">0.0</span>
<div class="r" style="left:940px;top:121px;width:13px;height:13px;background:#f6f6f6;border:1px solid #c8c8c8;border-radius:3px;"></div>
<div class="r" style="left:940px;top:143px;width:13px;height:13px;background:#f6f6f6;border:1px solid #c8c8c8;border-radius:3px;"></div>
<div class="r" style="left:940px;top:165px;width:13px;height:13px;background:#f6f6f6;border:1px solid #c8c8c8;border-radius:3px;"></div>
<span class="t" style="left:959.40px;top:121.00px;font-size:12.5px;line-height:14px;font-family:'Liberation Sans',sans-serif;color:#a0a0a0;transform:scale(0.8230,1);transform-origin:0 11px;">0.0</span>
<span class="t" style="left:959.40px;top:143.00px;font-size:12.5px;line-height:14px;font-family:'Liberation Sans',sans-serif;color:#a0a0a0;transform:scale(0.8230,1);transform-origin:0 11px;">0.0</span>
<span class="t" style="left:959.40px;top:165.00px;font-size:12.5px;line-height:14px;font-family:'Liberation Sans',sans-serif;color:#a0a0a0;transform:scale(0.8230,1);transform-origin:0 11px;">0.0</span>
<span class="t" style="left:1011.30px;top:117.00px;font-size:12.5px;line-height:14px;font-family:'Liberation Sans',sans-serif;color:#a0a0a0;transform:scale(0.8281,1);transform-origin:0 11px;">Shape model</span>
<div class="r" style="left:1081px;top:117px;width:13px;height:13px;background:#f6f6f6;border:1px solid #c8c8c8;border-radius:3px;"></div>
<span class="t" style="left:997.30px;top:145.00px;font-size:11px;line-height:12px;font-family:'Liberation Sans',sans-serif;color:#000;transform:scale(0.9763,1);transform-origin:0 10px;">a/b: 1.00, dMag: 0.00</span>
<span class="t" style="left:1001.30px;top:170.00px;font-size:11px;line-height:12px;font-family:'Liberation Sans',sans-serif;color:#000;transform:scale(0.9545,1);transform-origin:0 10px;">Motion: 25.34 km/s</span>
<svg style="left:774px;top:192px" width="13" height="13"><rect width="13" height="13" rx="3" fill="#005fb8"/><path d="M3.200 6.900L5.500 9 9.900 4.400" fill="none" stroke="#fff" stroke-width="0.900" stroke-opacity=".85"/></svg>
<span class="t" style="left:792.70px;top:192.00px;font-size:12.5px;line-height:14px;font-family:'Liberation Sans',sans-serif;color:#000;transform:scale(0.8267,1);transform-origin:0 11px;">Circular</span>
<svg style="left:844px;top:192px" width="13" height="13"><rect width="13" height="13" rx="3" fill="#005fb8"/><path d="M3.200 6.900L5.500 9 9.900 4.400" fill="none" stroke="#fff" stroke-width="0.900" stroke-opacity=".85"/></svg>
<span class="t" style="left:863.80px;top:185.00px;font-size:11px;line-height:12px;font-family:'Liberation Sans',sans-serif;color:#000;transform:scale(0.9144,1);transform-origin:0 10px;">Use assumed</span>
<span class="t" style="left:863.80px;top:199.00px;font-size:11px;line-height:12px;font-family:'Liberation Sans',sans-serif;color:#000;transform:scale(0.9743,1);transform-origin:0 10px;">diameter</span>
<div class="r" style="left:942px;top:192px;width:13px;height:13px;background:#fafafa;border:1px solid #5c5c5c;border-radius:3px;"></div>
<span class="t" style="left:961.50px;top:192.00px;font-size:12.5px;line-height:14px;font-family:'Liberation Sans',sans-serif;color:#000;transform:scale(0.8481,1);transform-origin:0 11px;">Include Miss events</span>
<div class="r" style="left:772px;top:218px;width:322px;height:21px;background:#f0f0f0;border:1px solid #a0a0a0;border-right-color:#fff;border-bottom-color:#fff;"></div>
<div class="r" style="left:773px;top:219px;width:320px;height:19px;border:1px solid #696969;border-right-color:#e3e3e3;border-bottom-color:#e3e3e3;"></div>
<span class="t" style="left:780.70px;top:222.00px;font-size:12.5px;line-height:14px;font-family:'Liberation Sans',sans-serif;color:#a0a0a0;font-weight:bold;transform:scale(0.9327,1);transform-origin:0 11px;">Double stars - show</span>
<svg style="left:905.9px;top:223.1px" width="13" height="13"><circle cx="6.500" cy="6.500" r="6.500" fill="#c2c2c2"/><circle cx="6.500" cy="6.500" r="2.600" fill="#fff"/></svg>
<span class="t" style="left:922.50px;top:224.00px;font-size:11px;line-height:12px;font-family:'Liberation Sans',sans-serif;color:#a0a0a0;transform:scale(0.8839,1);transform-origin:0 10px;">Both</span>
<svg style="left:957.7px;top:223.1px" width="13" height="13"><circle cx="6.500" cy="6.500" r="6" fill="#f6f6f6" stroke="#c8c8c8" stroke-width="1"/></svg>
<span class="t" style="left:976.40px;top:224.00px;font-size:11px;line-height:12px;font-family:'Liberation Sans',sans-serif;color:#a0a0a0;transform:scale(0.8262,1);transform-origin:0 10px;">Primary</span>
<svg style="left:1022.9000000000001px;top:223.1px" width="13" height="13"><circle cx="6.500" cy="6.500" r="6" fill="#f6f6f6" stroke="#c8c8c8" stroke-width="1"/></svg>
<span class="t" style="left:1041.40px;top:224.00px;font-size:11px;line-height:12px;font-family:'Liberation Sans',sans-serif;color:#a0a0a0;transform:scale(0.8233,1);transform-origin:0 10px;">Secondary</span>
<span class="t" style="left:773.00px;top:249.00px;font-size:12.5px;line-height:14px;font-family:'Liberation Sans',sans-serif;color:#006400;font-weight:bold;transform:scale(0.9481,1);transform-origin:0 11px;">Quality of the fit</span>
<div class="r" style="left:873px;top:245px;width:214px;height:21px;background:#fff;border:1px solid #8a8a8a;border-radius:3px;"></div>
<div class="r" style="left:876px;top:248px;width:191px;height:15px;background:#90ee90;"></div>
<span class="t" style="left:877.20px;top:248.00px;font-size:12.5px;line-height:14px;font-family:'Liberation Sans',sans-serif;color:#000;transform:scale(0.8186,1);transform-origin:0 11px;">No reliable position or size</span>
<svg style="left:1072px;top:252px" width="12" height="8"><path d="M0.800 1.200L5.800 6.200 10.800 1.200" fill="none" stroke="#444" stroke-width="1"/></svg>
<div class="r" style="left:873px;top:269px;width:125px;height:17px;background:#add8e6;"></div>
<div class="r" style="left:873px;top:270px;width:13px;height:13px;background:#fafafa;border:1px solid #5c5c5c;border-radius:3px;"></div>
<span class="t" style="left:893.20px;top:270.00px;font-size:12.5px;line-height:14px;font-family:'Liberation Sans',sans-serif;color:#000;font-style:italic;transform:scale(0.8317,1);transform-origin:0 11px;">Flag for future review</span>
<div class="r" style="left:763px;top:289px;width:340px;height:82px;background:#f0ffff;border:1px solid #a0a0a0;border-right-color:#fff;border-bottom-color:#fff;"></div>
<div class="r" style="left:764px;top:290px;width:338px;height:80px;border:1px solid #696969;border-right-color:#e3e3e3;border-bottom-color:#e3e3e3;"></div>
<span class="t" style="left:771.33px;top:304.00px;font-size:12.5px;line-height:14px;font-family:'Liberation Sans',sans-serif;color:#800000;font-weight:bold;">P</span>
<span class="t" style="left:771.68px;top:317.00px;font-size:12.5px;line-height:14px;font-family:'Liberation Sans',sans-serif;color:#800000;font-weight:bold;">L</span>
<span class="t" style="left:770.64px;top:330.00px;font-size:12.5px;line-height:14px;font-family:'Liberation Sans',sans-serif;color:#800000;font-weight:bold;">O</span>
<span class="t" style="left:771.68px;top:344.00px;font-size:12.5px;line-height:14px;font-family:'Liberation Sans',sans-serif;color:#800000;font-weight:bold;">T</span>
<span class="t" style="left:791.80px;top:301.00px;font-size:12.5px;line-height:14px;font-family:'Liberation Sans',sans-serif;color:#800000;font-weight:bold;transform:scale(0.9460,1);transform-origin:0 11px;">Scale</span>
<div class="r" style="left:830px;top:298px;width:269px;height:19px;background:#fffacd;"></div>
<div class="r" style="left:835px;top:303px;width:258px;height:4px;background:#e7eaea;border:1px solid #d6d6d6;"></div>
<span class="t" style="left:791.80px;top:327.00px;font-size:12.5px;line-height:14px;font-family:'Liberation Sans',sans-serif;color:#800000;font-weight:bold;transform:scale(0.9155,1);transform-origin:0 11px;">Size</span>
<div class="r" style="left:821px;top:323px;width:163px;height:23px;background:#f0fff0;border:1px solid #a0a0a0;border-right-color:#fff;border-bottom-color:#fff;"></div>
<div class="r" style="left:822px;top:324px;width:161px;height:21px;border:1px solid #696969;border-right-color:#e3e3e3;border-bottom-color:#e3e3e3;"></div>
<svg style="left:831.0px;top:328.3px" width="13" height="13"><circle cx="6.500" cy="6.500" r="6.500" fill="#005fb8"/><circle cx="6.500" cy="6.500" r="2.600" fill="#fff"/></svg>
<span class="t" style="left:850.20px;top:328.00px;font-size:12.5px;line-height:14px;font-family:'Liberation Sans',sans-serif;color:#800000;font-weight:bold;transform:scale(0.8638,1);transform-origin:0 11px;">normal</span>
<svg style="left:895.0px;top:328.3px" width="13" height="13"><circle cx="6.500" cy="6.500" r="6" fill="#f4f4f4" stroke="#5c5c5c" stroke-width="1"/></svg>
<span class="t" style="left:913.60px;top:328.00px;font-size:12.5px;line-height:14px;font-family:'Liberation Sans',sans-serif;color:#800000;font-weight:bold;transform:scale(0.9842,1);transform-origin:0 11px;">x 2</span>
<svg style="left:938.8px;top:328.3px" width="13" height="13"><circle cx="6.500" cy="6.500" r="6" fill="#f4f4f4" stroke="#5c5c5c" stroke-width="1"/></svg>
<span class="t" style="left:957.80px;top:328.00px;font-size:12.5px;line-height:14px;font-family:'Liberation Sans',sans-serif;color:#800000;font-weight:bold;transform:scale(1.0187,1);transform-origin:0 11px;">x 5</span>
<span class="t" style="left:1006.90px;top:328.00px;font-size:12.5px;line-height:14px;font-family:'Liberation Sans',sans-serif;color:#800080;font-weight:bold;transform:scale(0.9008,1);transform-origin:0 11px;">Form opacity</span>
<span class="t" style="left:792.70px;top:353.00px;font-size:12.5px;line-height:14px;font-family:'Liberation Sans',sans-serif;color:#800000;font-weight:bold;transform:scale(0.9561,1);transform-origin:0 11px;">Scroll range x1.25</span>
<div class="r" style="left:903px;top:353px;width:13px;height:13px;background:#fafafa;border:1px solid #5c5c5c;border-radius:3px;"></div>
<div class="r" style="left:985px;top:346px;width:115px;height:21px;background:#fffacd;"></div>
<div class="r" style="left:991px;top:352px;width:102px;height:4px;background:#e7eaea;border:1px solid #d6d6d6;"></div>
<svg style="left:0;top:0" width="1120" height="810"><path d="M838.5 313V317M851.5 313V316M863.5 313V316M876.5 313V316M888.5 313V316M901.5 313V316M914.5 313V316M926.5 313V316M939.5 313V316M951.5 313V316M964.5 313V316M977.5 313V316M989.5 313V316M1002.5 313V316M1014.5 313V316M1027.5 313V316M1040.5 313V316M1052.5 313V316M1065.5 313V316M1077.5 313V316M1090.5 313V317" stroke="#c4c4c4" stroke-width="1"/><path d="M995.5 363V367M1014.5 363V366M1033.5 363V366M1051.5 363V366M1070.5 363V366M1089.5 363V367" stroke="#c4c4c4" stroke-width="1"/><path d="M961 301h6.400v6.500l-3.200 3.200-3.200-3.200z" fill="#0078d7"/></svg>
<svg style="left:0;top:0" width="1120" height="810"><path d="M1085.200 348.200h8v8.400l-4 4-4-4z" fill="#0078d7"/></svg>
<span class="t" style="left:777.50px;top:382.00px;font-size:12.5px;line-height:14px;font-family:'Liberation Sans',sans-serif;color:#000;transform:scale(0.8428,1);transform-origin:0 11px;">RMS fit -26.2 ±0.0 km</span>
<div class="r" style="left:769px;top:402px;width:328px;height:368px;background:#fff;border:1px solid #7a8193;"></div>
<span class="t" style="left:774.00px;top:405.00px;font-size:12px;line-height:14px;font-family:'Liberation Mono',monospace;color:#000;letter-spacing:-0.200px;">  1    Toshihiro Horikawa, near Takamatsu, Kag</span>
<span class="t" style="left:774.00px;top:419.00px;font-size:12px;line-height:14px;font-family:'Liberation Mono',monospace;color:#000;letter-spacing:-0.200px;">  2(P) Predicted</span>
<div class="r" style="left:771px;top:752px;width:324px;height:17px;background:#f0f0f0;"></div>
<div class="r" style="left:788px;top:759px;width:268px;height:2px;background:#858585;"></div>
<div class="r" style="left:367px;top:795px;width:16px;height:1px;background:#b0b0b0;"></div>
</div></body></html>
